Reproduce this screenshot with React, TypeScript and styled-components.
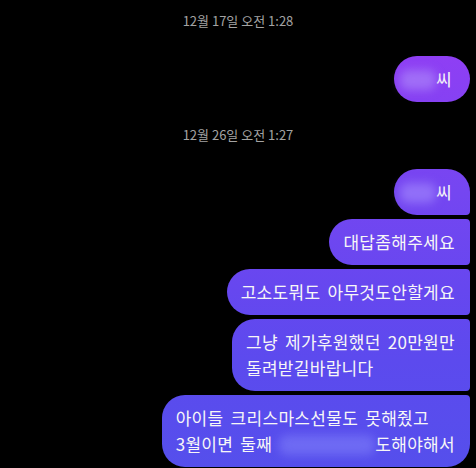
import React from "react";
import styled, { createGlobalStyle, css } from "styled-components";

const Global = createGlobalStyle`
  html, body { margin: 0; padding: 0; background: #000; }
  body { font-family: "Noto Sans CJK KR", "Noto Sans", sans-serif; -webkit-font-smoothing: antialiased; }
`;

const Thread = styled.div`
  width: 476px;
  height: 468px;
  overflow: hidden;
  background: #000;
  display: flex;
  flex-direction: column;
  padding: 12px 6px 0 0;
  box-sizing: border-box;
`;

const Stamp = styled.div<{ $top: number; $bottom: number }>`
  height: 18px;
  line-height: 18px;
  text-align: center;
  font-size: 13px;
  color: #a3a3a3;
  padding-left: 6px;
  margin-top: ${(p) => p.$top}px;
  margin-bottom: ${(p) => p.$bottom}px;
`;

const Group = styled.div`
  display: flex;
  flex-direction: column;
  align-items: flex-end;
  gap: 4px;
`;

type Pos = "single" | "first" | "middle" | "last";

const radius = (pos: Pos) => {
  switch (pos) {
    case "single":
      return css`border-radius: 23px;`;
    case "first":
      return css`border-radius: 23px 23px 4px 23px;`;
    case "middle":
      return css`border-radius: 23px 4px 4px 23px;`;
    default:
      return css`border-radius: 23px 4px 23px 23px;`;
  }
};

const Bubble = styled.div<{ $pos: Pos; $name?: boolean }>`
  box-sizing: border-box;
  padding: ${(p) => (p.$name ? "10px 18px 10px 6px" : "10px 15px 10px 14px")};
  font-size: 17px;
  letter-spacing: 0.3px;
  word-spacing: 3px;
  line-height: 26px;
  color: #f7f7f7;
  white-space: nowrap;
  background-image: linear-gradient(180deg, #9a3cf6 0px, #8a40f3 80px, #7546f1 190px, #6647ef 290px, #5c4aee 360px, #554fec 468px);
  background-attachment: fixed;
  ${(p) => radius(p.$pos)}
`;

const Blur = styled.span<{ $w: number; $tone: string }>`
  display: inline-block;
  width: ${(p) => p.$w}px;
  height: 20px;
  vertical-align: middle;
  margin-top: -3px;
  border-radius: 8px;
  background: ${(p) => p.$tone};
  filter: blur(5px);
`;

export default function App() {
  return (
    <>
      <Global />
      <Thread>
        <Stamp $top={0} $bottom={26}>12월 17일 오전 1:28</Stamp>
        <Group>
          <Bubble $pos="single" $name>
            <Blur $w={36} $tone="rgba(175,140,250,0.6)" />씨
          </Bubble>
        </Group>
        <Stamp $top={24} $bottom={25}>12월 26일 오전 1:27</Stamp>
        <Group>
          <Bubble $pos="first" $name>
            <Blur $w={36} $tone="rgba(170,145,255,0.55)" />씨
          </Bubble>
          <Bubble $pos="middle">대답좀해주세요</Bubble>
          <Bubble $pos="middle">고소도뭐도 아무것도안할게요</Bubble>
          <Bubble $pos="middle">
            그냥 제가후원했던 20만원만
            <br />
            돌려받길바랍니다
          </Bubble>
          <Bubble $pos="last">
            아이들 크리스마스선물도 못해줬고
            <br />
            3월이면 둘째 <Blur $w={96} $tone="rgba(130,130,250,0.55)" />도해야해서
          </Bubble>
        </Group>
      </Thread>
    </>
  );
}
